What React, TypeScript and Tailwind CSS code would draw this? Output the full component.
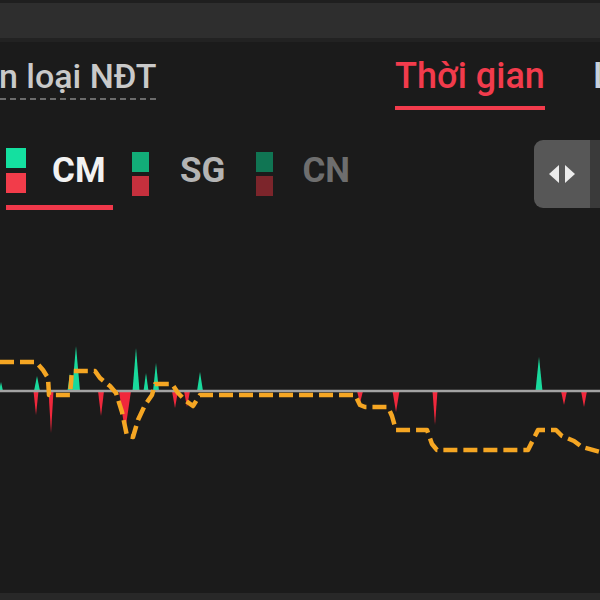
import React from 'react'

const greenSpikes = [
  { x: 1, top: 382, w: 4 },
  { x: 37, top: 376, w: 6 },
  { x: 70, top: 373, w: 5 },
  { x: 76, top: 346, w: 8 },
  { x: 136, top: 348, w: 7 },
  { x: 146, top: 373, w: 5 },
  { x: 156, top: 363, w: 6 },
  { x: 200, top: 372, w: 6 },
  { x: 539, top: 357, w: 7 },
]

const redSpikes = [
  { x: 36, bottom: 415, w: 5 },
  { x: 51, bottom: 433, w: 5 },
  { x: 101, bottom: 416, w: 6 },
  { x: 125, bottom: 432, w: 12 },
  { x: 175, bottom: 408, w: 6 },
  { x: 187, bottom: 407, w: 6 },
  { x: 360, bottom: 403, w: 6 },
  { x: 396, bottom: 412, w: 7 },
  { x: 435, bottom: 425, w: 5 },
  { x: 564, bottom: 405, w: 6 },
  { x: 584, bottom: 407, w: 6 },
]

const BASE = 391

// yellow net-flow line, image coordinates
const flowPath =
  'M0 362 L36 362 L43 370 L48 378 L49 395 L70 395 L72 371 L95 371 L100 378 L110 386 L116 393 L122 412 L127 436 L133 437 L138 420 L145 405 L152 395 L155 384 L172 384 L178 393 L186 401 L193 406 L200 395 L355 395 L360 405 L365 407 L388 407 L392 416 L396 430 L427 430 L432 444 L437 450 L528 450 L533 440 L538 430 L556 430 L562 436 L574 441 L582 447 L600 452'

function Chart() {
  return (
    <svg width="600" height="378" viewBox="0 215 600 378" className="block">
      {greenSpikes.map((s, i) => (
        <polygon
          key={'g' + i}
          points={`${s.x - s.w / 2},${BASE} ${s.x},${s.top} ${s.x + s.w / 2},${BASE}`}
          fill="#19d99c"
        />
      ))}
      {redSpikes.map((s, i) => (
        <polygon
          key={'r' + i}
          points={`${s.x - s.w / 2},${BASE} ${s.x},${s.bottom} ${s.x + s.w / 2},${BASE}`}
          fill="#f0283c"
        />
      ))}
      <line x1="0" y1={BASE} x2="600" y2={BASE} stroke="#a3a3a3" strokeWidth="2.5" />
      <path
        d={flowPath}
        fill="none"
        stroke="#f5a623"
        strokeWidth="4.5"
        strokeDasharray="14 6"
        strokeLinejoin="round"
      />
    </svg>
  )
}

export default function App() {
  return (
    <div className="w-[600px] h-[600px] overflow-hidden bg-[#1b1b1b] flex flex-col font-['Roboto',sans-serif]">
      {/* top strip */}
      <div className="h-[3px] bg-[#1f1f1f]" />
      <div className="h-[35px] bg-[#2e2e2e]" />
      <div className="h-[4px] bg-[#222222]" />

      {/* tabs */}
      <div className="flex items-start h-[73px] pt-[16px]">
        <div className="w-[395px] shrink-0 pt-[1px]">
          <div className="-ml-[60px] inline-block text-[34px] leading-none font-medium text-[#c9c9c9] pb-[5px] border-b-2 border-dashed border-[#6b6b6b] whitespace-nowrap">
            Phân loại NĐT
          </div>
        </div>
        <div className="w-[150px] shrink-0 flex flex-col">
          <span className="text-[36px] leading-none font-medium text-[#f23b4c] whitespace-nowrap">Thời gian</span>
          <div className="mt-[12px] h-[4px] bg-[#f23b4c]" />
        </div>
        <span className="ml-[48px] text-[36px] leading-none font-medium text-[#c8d0dc] whitespace-nowrap">Lịch sử</span>
      </div>

      {/* market filters */}
      <div className="flex items-start mt-[25px] h-[75px]">
        <div className="ml-[6px] flex flex-col w-[107px] shrink-0">
          <div className="flex items-start">
            <div className="mt-[8px] flex flex-col gap-[5px]">
              <div className="w-[20px] h-[20px] bg-[#14e0a0]" />
              <div className="w-[20px] h-[20px] bg-[#f23c4a]" />
            </div>
            <span className="ml-[26px] mt-[13px] text-[35px] leading-none font-bold text-[#f2f2f2]">CM</span>
          </div>
          <div className="mt-[12px] h-[5px] bg-[#f0384a]" />
        </div>
        <div className="ml-[19px] flex items-start shrink-0">
          <div className="mt-[12px] flex flex-col gap-[4px]">
            <div className="w-[17px] h-[20px] bg-[#12ad78]" />
            <div className="w-[17px] h-[20px] bg-[#c5303d]" />
          </div>
          <span className="ml-[31px] mt-[13px] text-[35px] leading-none font-bold text-[#b4b4b4]">SG</span>
        </div>
        <div className="ml-[31px] flex items-start shrink-0">
          <div className="mt-[12px] flex flex-col gap-[4px]">
            <div className="w-[17px] h-[20px] bg-[#107553]" />
            <div className="w-[17px] h-[20px] bg-[#7c252b]" />
          </div>
          <span className="ml-[29px] mt-[13px] text-[35px] leading-none font-bold text-[#6e6e6e]">CN</span>
        </div>
        <div className="flex-1" />
        <div className="w-[56px] h-[68px] rounded-l-[9px] bg-[#575757] flex items-center justify-center gap-[4px] shrink-0">
          <svg width="11" height="18" viewBox="0 0 11 18">
            <polygon points="10,0 0,9 10,18" fill="#ececec" />
          </svg>
          <svg width="11" height="18" viewBox="0 0 11 18">
            <polygon points="1,0 11,9 1,18" fill="#ececec" />
          </svg>
        </div>
        <div className="w-[10px] h-[68px] bg-[#3a3a3a] shrink-0" />
      </div>

      {/* chart */}
      <Chart />

      <div className="flex-1 bg-[#282828]" />
    </div>
  )
}
